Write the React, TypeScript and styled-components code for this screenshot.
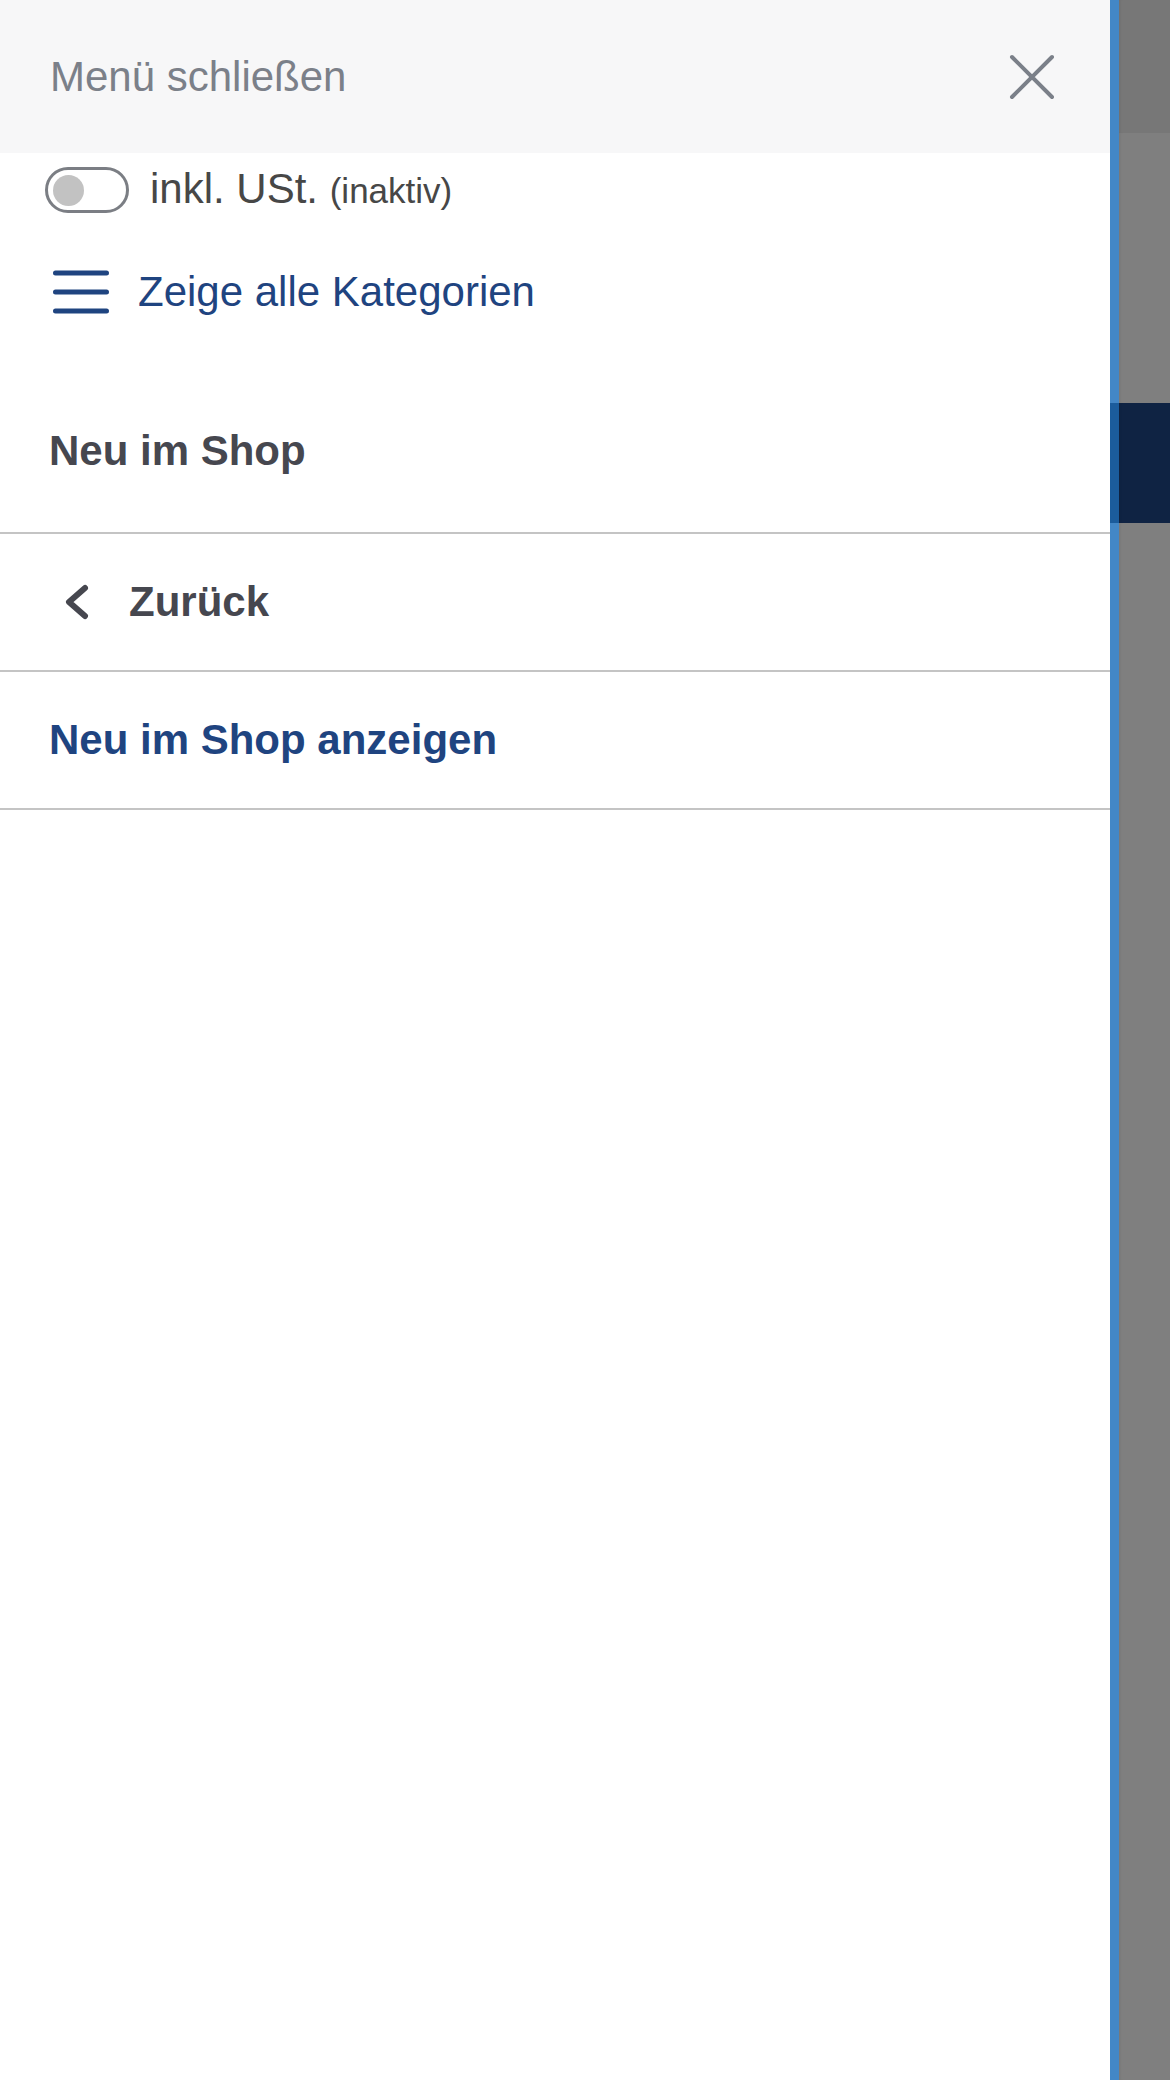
import styled, { createGlobalStyle } from 'styled-components';

const GlobalStyle = createGlobalStyle`
    html, body {
        margin: 0;
        padding: 0;
        background: #ffffff;
    }
    body {
        font-family: "Liberation Sans", Arial, Helvetica, sans-serif;
        -webkit-font-smoothing: antialiased;
    }
`

const Page = styled.div`
    display: flex;
    width: 1170px;
    height: 2080px;
    overflow: hidden;
`

const Drawer = styled.nav`
    width: 1110px;
    height: 100%;
    display: flex;
    flex-direction: column;
    background: #ffffff;
`

const Header = styled.div`
    height: 153px;
    flex-shrink: 0;
    display: flex;
    align-items: center;
    justify-content: space-between;
    padding: 0 55px 0 50px;
    background: #f7f7f8;
    box-sizing: border-box;
`

const HeaderTitle = styled.span`
    font-size: 42px;
    line-height: 48px;
    color: #7b8089;
`

const CloseButton = styled.button`
    display: flex;
    padding: 0;
    background: none;
    border: none;
    cursor: pointer;
`

const ToggleRow = styled.label`
    height: 74px;
    display: flex;
    align-items: center;
    gap: 21px;
    padding-left: 45px;
`

const Switch = styled.span<{ $on?: boolean }>`
    width: 84px;
    height: 46px;
    box-sizing: border-box;
    display: flex;
    align-items: center;
    justify-content: ${p => p.$on ? 'flex-end' : 'flex-start'};
    padding: 0 5px;
    border: 3px solid #7b7e84;
    border-radius: 23px;
    background: #ffffff;
`

const Knob = styled.span`
    width: 31px;
    height: 31px;
    border-radius: 50%;
    background: #c2c2c2;
`

const ToggleText = styled.span`
    font-size: 42px;
    line-height: 48px;
    color: #474747;
`

const ToggleHint = styled.span`
    font-size: 35px;
    color: #474747;
`

const CategoryRow = styled.a`
    height: 130px;
    display: flex;
    align-items: center;
    gap: 29px;
    padding-left: 53px;
    color: #1f4480;
    text-decoration: none;
    font-size: 42px;
    line-height: 48px;
`

const SectionTitle = styled.div`
    padding: 70px 49px 57px;
    font-size: 42px;
    line-height: 48px;
    font-weight: bold;
    color: #46474f;
    border-bottom: 2px solid #c4c4c4;
`

const ListRow = styled.a<{ $accent?: boolean }>`
    height: 136px;
    display: flex;
    align-items: center;
    gap: 39px;
    padding-left: ${p => p.$accent ? '49px' : '64px'};
    font-size: 42px;
    line-height: 48px;
    font-weight: bold;
    color: ${p => p.$accent ? '#1f4480' : '#46474f'};
    text-decoration: none;
    border-bottom: 2px solid #c4c4c4;
`

const Backdrop = styled.div`
    flex: 1;
    display: flex;
    flex-direction: column;
`

const Shade = styled.div<{ $h?: number, $fill: string, $edge: string }>`
    height: ${p => p.$h ? `${p.$h}px` : 'auto'};
    flex: ${p => p.$h ? '0 0 auto' : '1'};
    background: ${p => p.$fill};
    border-left: 9px solid ${p => p.$edge};
    box-shadow: inset 3px 0 3px -2px rgba(0, 0, 0, 0.08);
`

const CloseIcon = () => (
    <svg width="46" height="46" viewBox="0 0 46 46">
        <path d="M3 3 L43 43 M43 3 L3 43" stroke="#7b8089" strokeWidth="4" strokeLinecap="round" fill="none" />
    </svg>
)

const MenuIcon = () => (
    <svg width="56" height="48" viewBox="0 0 56 48">
        <path d="M2.5 5 H53.5 M2.5 24 H53.5 M2.5 43 H53.5" stroke="#1f4480" strokeWidth="5" strokeLinecap="round" fill="none" />
    </svg>
)

const BackIcon = () => (
    <svg width="26" height="38" viewBox="0 0 26 38">
        <path d="M21 5 L5 19 L21 33" stroke="#46474f" strokeWidth="6" strokeLinecap="round" strokeLinejoin="round" fill="none" />
    </svg>
)

export default function App() {
    return (
        <>
            <GlobalStyle />
            <Page>
                <Drawer>
                    <Header>
                        <HeaderTitle>Menü schließen</HeaderTitle>
                        <CloseButton aria-label="Menü schließen">
                            <CloseIcon />
                        </CloseButton>
                    </Header>
                    <ToggleRow>
                        <Switch><Knob /></Switch>
                        <ToggleText>inkl. USt. <ToggleHint>(inaktiv)</ToggleHint></ToggleText>
                    </ToggleRow>
                    <CategoryRow href="#">
                        <MenuIcon />
                        Zeige alle Kategorien
                    </CategoryRow>
                    <SectionTitle>Neu im Shop</SectionTitle>
                    <ListRow href="#">
                        <BackIcon />
                        Zurück
                    </ListRow>
                    <ListRow href="#" $accent>Neu im Shop anzeigen</ListRow>
                </Drawer>
                <Backdrop>
                    <Shade $h={133} $fill="#777777" $edge="#4387c6" />
                    <Shade $h={270} $fill="#7f7f7f" $edge="#4387c6" />
                    <Shade $h={120} $fill="#0f2343" $edge="#1b5c9c" />
                    <Shade $fill="#7f7f7f" $edge="#4387c6" />
                </Backdrop>
            </Page>
        </>
    )
}
